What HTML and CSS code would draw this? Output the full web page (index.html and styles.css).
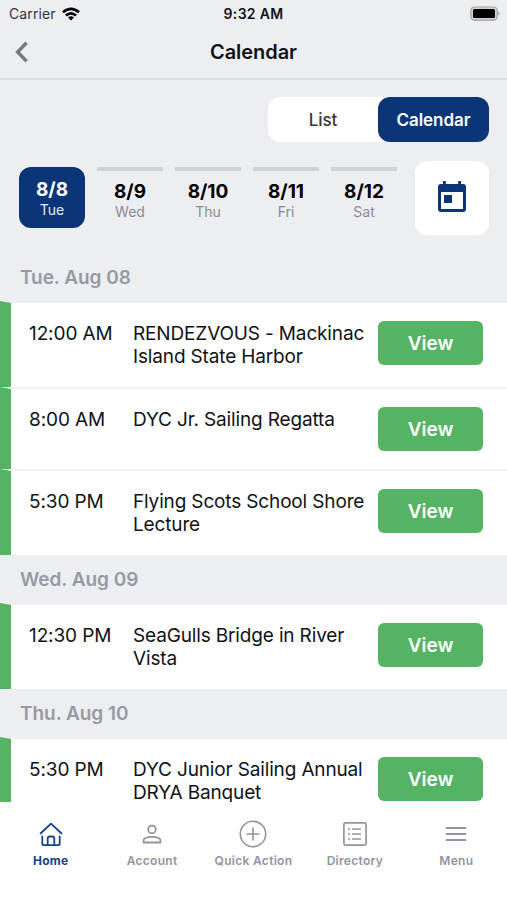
FILE: index.html
```html
<!DOCTYPE html>
<html lang="en">
<head>
<meta charset="utf-8">
<title>Calendar</title>
<link rel="stylesheet" href="styles.css">
</head>
<body>
<div class="app">
  <div class="status">
    <div class="carrier"><span class="carrier-name">Carrier</span>
      <svg width="18" height="14" viewBox="0 0 18 14"><g fill="none" stroke="#000" stroke-width="2.7"><path d="M1 5.2Q9-1.6 17 5.2"/><path d="M3.9 8.5Q9 4.2 14.1 8.5"/></g><path d="M9 13.4L6.1 10.5Q9 8.2 11.9 10.5Z"/></svg>
    </div>
    <div class="clock">9:32 AM</div>
    <div class="battery"><svg width="31" height="16" viewBox="0 0 31 16"><rect x=".8" y="1" width="26.4" height="13.2" rx="3.6" fill="#d0d1d3" stroke="#a2a3a5" stroke-width="1.2"/><rect x="3" y="3.1" width="22" height="9" rx="1.6"/><path d="M28.4 5.2Q30.8 7.6 28.4 10Z" fill="#a2a3a5"/></svg></div>
  </div>
  <header class="navbar">
    <svg class="back" width="14" height="22" viewBox="0 0 14 22"><path d="M12.6 1.7L3.6 11L12.6 20.2" fill="none" stroke="#78797c" stroke-width="3.4"/></svg>
    <h1 class="title">Calendar</h1>
  </header>
  <div class="toggle">
    <div class="option">List</div>
    <div class="option option-on">Calendar</div>
  </div>
  <div class="days">
    <div class="day day-on"><b class="date">8/8</b><span class="weekday">Tue</span></div>
    <div class="day"><b class="date">8/9</b><span class="weekday">Wed</span></div>
    <div class="day"><b class="date">8/10</b><span class="weekday">Thu</span></div>
    <div class="day"><b class="date">8/11</b><span class="weekday">Fri</span></div>
    <div class="day"><b class="date">8/12</b><span class="weekday">Sat</span></div>
    <div class="picker"><svg width="28" height="31" viewBox="0 0 28 31"><path fill="#0b3576" fill-rule="evenodd" d="M5 0h2.800v3h12.400V0H23v3h2a3 3 0 0 1 3 3v22a3 3 0 0 1-3 3H3a3 3 0 0 1-3-3V6a3 3 0 0 1 3-3h2zM3 11v17h22V11zM6 14h8v8H6z"/></svg></div>
  </div>
  <main class="agenda">
    <h2 class="heading">Tue. Aug 08</h2>
    <div class="event event-first"><span class="time">12:00 AM</span><span class="name">RENDEZVOUS - Mackinac<br>Island State Harbor</span><span class="view">View</span></div>
    <div class="event event-short"><span class="time">8:00 AM</span><span class="name">DYC Jr. Sailing Regatta</span><span class="view">View</span></div>
    <div class="event"><span class="time">5:30 PM</span><span class="name">Flying Scots School Shore<br>Lecture</span><span class="view">View</span></div>
    <h2 class="heading">Wed. Aug 09</h2>
    <div class="event event-first"><span class="time">12:30 PM</span><span class="name">SeaGulls Bridge in River<br>Vista</span><span class="view">View</span></div>
    <h2 class="heading">Thu. Aug 10</h2>
    <div class="event event-first"><span class="time">5:30 PM</span><span class="name">DYC Junior Sailing Annual<br>DRYA Banquet</span><span class="view">View</span></div>
  </main>
  <nav class="tabs">
    <div class="tab tab-on"><svg width="28" height="28" viewBox="0 0 28 28"><g fill="none" stroke="currentColor" stroke-width="1.8" stroke-linecap="round" stroke-linejoin="round"><path d="M3.500 13.500L14 3.700L24.500 13.500"/><path d="M5.300 16.500V23.500q0 1.700 1.700 1.700h14q1.700 0 1.700-1.700V16.500"/><path d="M10.700 25v-6.500q0-2 2-2h2.600q2 0 2 2V25"/></g></svg><span>Home</span></div>
    <div class="tab"><svg width="28" height="28" viewBox="0 0 28 28"><g fill="none" stroke="currentColor" stroke-width="1.800"><circle cx="14" cy="9.400" r="3.800"/><path d="M5.600 22.500V20.500C5.600 18 9.500 16.900 14 16.900S22.400 18 22.400 20.500V22.500Z"/></g></svg><span>Account</span></div>
    <div class="tab"><svg width="28" height="28" viewBox="0 0 28 28"><g fill="none" stroke="currentColor" stroke-width="1.600"><circle cx="14" cy="14" r="12.700"/><path d="M14 7.500v13M7.500 14h13"/></g></svg><span>Quick Action</span></div>
    <div class="tab"><svg width="28" height="28" viewBox="0 0 28 28"><g fill="none" stroke="currentColor" stroke-width="1.700"><rect x="2.900" y="2.900" width="22.200" height="22.200" rx="1.500"/><path d="M11 9h9M11 14h9M11 19h9M7 9h2M7 14h2M7 19h2"/></g></svg><span>Directory</span></div>
    <div class="tab"><svg width="28" height="28" viewBox="0 0 28 28"><path d="M4.500 8h19M4.500 14h19M4.500 20h19" fill="none" stroke="currentColor" stroke-width="1.900" stroke-linecap="round"/></svg><span>Menu</span></div>
  </nav>
</div>
</body>
</html>
```
FILE: styles.css
```css
* { box-sizing: border-box; }
body { margin: 0; font-family: Inter, "Liberation Sans", sans-serif; color: #111216; background: #edeef2; }
svg { display: block; flex: none; }
.app { width: 507px; height: 900px; display: flex; flex-direction: column; overflow: hidden; background: #edeef2; }
.status { height: 28px; flex: none; display: grid; grid-template-columns: 1fr auto 1fr; align-items: center; padding: 0 6px 0 9px; font-size: 14px; line-height: 20px; }
.carrier { display: flex; align-items: center; gap: 6px; }
.carrier-name { color: #333437; letter-spacing: .1px; }
.clock { margin-right: 3px; font-weight: 600; letter-spacing: .3px; }
.battery { justify-self: end; }
.navbar { height: 52px; flex: none; display: grid; grid-template-columns: 1fr auto 1fr; align-items: center; padding: 0 0 2px; border-bottom: 2px solid #dddee2; }
.back { margin-left: 14px; }
.title { margin: 0; font-size: 20px; line-height: 26px; font-weight: 600; letter-spacing: -.05px; }
.toggle { width: 221px; height: 45px; flex: none; margin: 17px 18px 0 auto; display: flex; border-radius: 12px; background: #fff; }
.option { width: 110px; display: flex; align-items: center; justify-content: center; font-size: 17px; font-weight: 500; letter-spacing: -.05px; color: #35353d; }
.option-on { width: 111px; border-radius: 12px; background: #0b3576; color: #fff; font-weight: 600; }
.days { height: 74px; flex: none; margin-top: 19px; padding-left: 19px; display: flex; gap: 12px; }
.day { width: 66px; height: 61px; margin-top: 6px; padding-top: 11px; border-top: 4px solid #d0d2d5; display: flex; flex-direction: column; align-items: center; color: #000; }
.date { font-size: 19px; line-height: 20px; font-weight: 700; }
.weekday { font-size: 14px; line-height: 20px; color: #8b8c91; }
.day-on { border: 0; border-radius: 12px; padding-top: 13px; background: #0b3576; color: #fff; }
.day-on .weekday { color: #e8edf6; }
.picker { width: 74px; height: 74px; margin-left: 6px; padding-bottom: 4px; display: flex; align-items: center; justify-content: center; border-radius: 12px; background: #fff; }
.agenda { height: 549px; flex: none; margin-top: 18px; overflow: hidden; }
.heading { margin: 0; height: 48px; padding: 14px 20px 0; font-size: 19px; line-height: 22px; font-weight: 600; letter-spacing: -.05px; color: #989aa2; }
.event { height: 86px; display: flex; border-top: 2px solid #f1f2f4; border-left: 11px solid #55b364; background: #fff; font-size: 19px; line-height: 23px; }
.event-first { border-top-color: #edeef2; }
.event-short { height: 82px; }
.time { width: 104px; margin: 19px 0 0 18px; flex: none; letter-spacing: -.1px; }
.name { width: 245px; margin-top: 19px; flex: none; white-space: nowrap; letter-spacing: -.15px; }
.view { width: 105px; height: 44px; margin-top: 18px; display: flex; align-items: center; justify-content: center; border-radius: 6px; background: #55b364; color: #fff; font-weight: 600; }
.tabs { height: 98px; flex: none; padding-top: 18px; display: grid; grid-template-columns: repeat(5, 1fr); background: #fff; }
.tab { display: flex; flex-direction: column; align-items: center; gap: 5px; color: #92959f; font-size: 12px; line-height: 16px; font-weight: 600; letter-spacing: .3px; white-space: nowrap; }
.tab-on { color: #154383; font-weight: 700; }
```
